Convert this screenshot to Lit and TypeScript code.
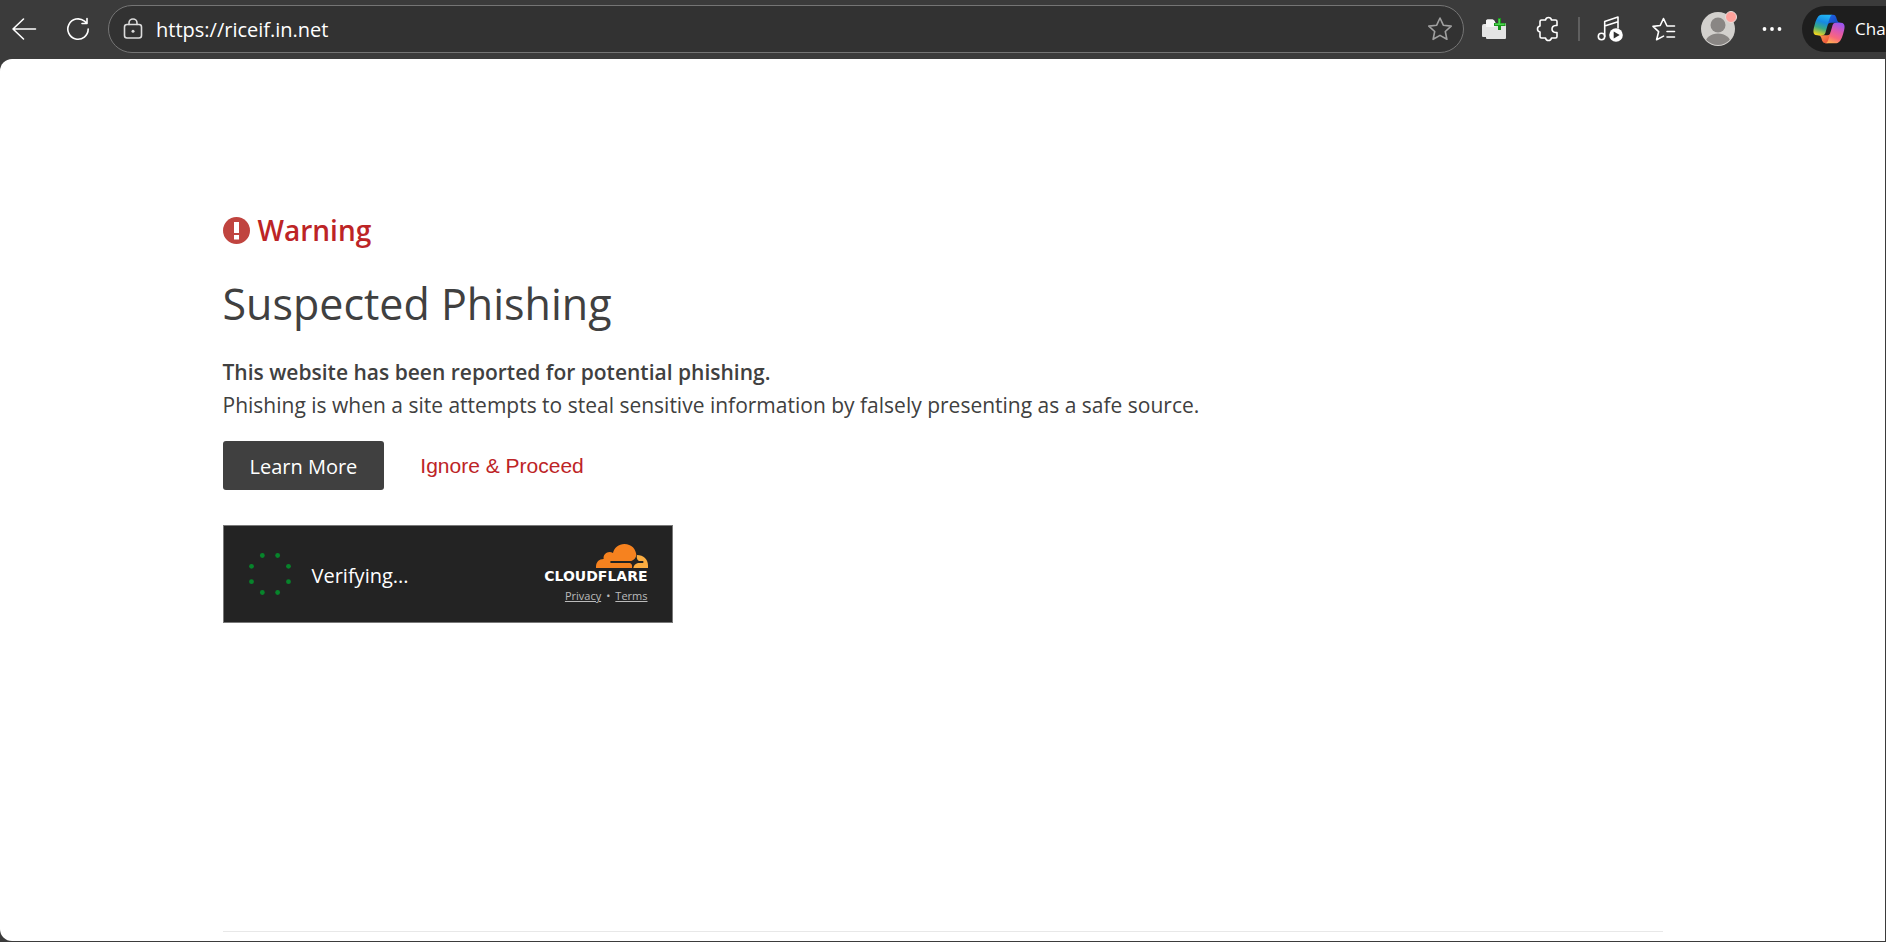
import { LitElement, html, css, svg } from "lit";
import { customElement, state } from "lit/decorators.js";

const DOTS = [22.5, 67.5, 112.5, 157.5, 202.5, 247.5, 292.5, 337.5].map((deg) => {
  const a = (deg * Math.PI) / 180;
  return { x: 22 + 20 * Math.cos(a), y: 22 + 20 * Math.sin(a) };
});

@customElement("browser-toolbar")
class BrowserToolbar extends LitElement {
  @state() private url = "https://riceif.in.net";

  static styles = css`
    :host {
      display: block;
      color: #fff;
    }
    .bar {
      display: flex;
      align-items: center;
      gap: 6px;
      height: 59px;
      box-sizing: border-box;
      padding-bottom: 1px;
      overflow: hidden;
    }
    button {
      border: 0;
      padding: 0;
      margin: 0;
      background: none;
      color: inherit;
      font: inherit;
    }
    .tool {
      flex: none;
      width: 48px;
      height: 48px;
      display: grid;
      place-items: center;
    }
    .tool svg {
      display: block;
    }
    .line {
      fill: none;
      stroke: currentColor;
      stroke-width: 1.6;
      stroke-linecap: round;
      stroke-linejoin: round;
    }
    .address {
      flex: 1;
      min-width: 0;
      height: 48px;
      box-sizing: border-box;
      display: flex;
      align-items: center;
      border: 1px solid #757575;
      border-radius: 24px;
      background: #323232;
    }
    .address .tool {
      width: 47px;
      height: 46px;
      color: #dcdcdc;
    }
    .address .star {
      color: #a0a0a0;
    }
    input {
      flex: 1;
      min-width: 0;
      border: 0;
      outline: 0;
      padding: 2px 0 0;
      background: none;
      color: #fff;
      font: 20px/28px "Open Sans", sans-serif;
    }
    .divider {
      flex: none;
      width: 2px;
      height: 24px;
      background: #5f5f5f;
    }
    .pill {
      flex: none;
      display: flex;
      align-items: center;
      gap: 9px;
      width: 84px;
      height: 46px;
      box-sizing: border-box;
      padding-left: 10px;
      border-radius: 23px 0 0 23px;
      background: #1e1e1e;
      font: 17px/24px "Open Sans", sans-serif;
    }
    .pill svg {
      flex: none;
    }
  `;

  render() {
    return html`
      <nav class="bar" aria-label="Browser">
        <button class="tool" aria-label="Back">
          <svg width="26" height="24" viewBox="0 0 26 24">
            <path class="line" d="M12.5 2 2 12l10.500 10M2 12h22.500" />
          </svg>
        </button>
        <button class="tool" aria-label="Refresh">
          <svg width="24" height="24" viewBox="0 0 24 24">
            <path class="line" d="M22.200 12A10.200 10.200 0 1 1 18.500 4.200L20.500 6M21 1.500v5h-5" />
          </svg>
        </button>
        <div class="address">
          <button class="tool" aria-label="View site information">
            <svg width="20" height="22" viewBox="0 0 20 22">
              <rect class="line" x="1.500" y="6.500" width="17" height="13.500" rx="2.500" />
              <path class="line" d="M6 6.500V5a4 4 0 0 1 8 0v1.500" />
              <circle cx="10" cy="13.200" r="1.500" fill="currentColor" />
            </svg>
          </button>
          <input
            aria-label="Address"
            .value=${this.url}
            @input=${(e: Event) => (this.url = (e.target as HTMLInputElement).value)}
          />
          <button class="tool star" aria-label="Add to favorites">
            <svg width="26" height="26" viewBox="0 0 26 26">
              <path
                class="line"
                d="M13 2l3.300 7.200 7.900.900-5.900 5.400 1.600 7.800L13 19.400l-6.900 3.900 1.600-7.800-5.900-5.400 7.900-.900z"
              />
            </svg>
          </button>
        </div>
        <button class="tool" aria-label="Extension">
          <svg width="24" height="22" viewBox="0 0 24 22">
            <path d="M4 3q0-1.500 1.500-1.500h5Q12 1.500 12.500 3l1 2H23q1 0 1 1v14q0 1-1 1H5q-1 0-1-1v-1H1q-1 0-1-1V8q0-2 2-2h2z" fill="#e4e4e4" />
            <path d="M4 3q0-1.500 1.500-1.500h5Q12 1.500 12.500 3l1 2v4H4z" fill="#f6f6f6" />
            <path d="M16 0h3v5h4.500v3H19v4h-3V8h-4V5h4z" fill="#18951b" />
            <path d="M16.500 1H18v4.500h4.500V7H13V5.500h3.500z" fill="#4fd44f" />
          </svg>
        </button>
        <button class="tool" aria-label="Extensions">
          <svg width="24" height="26" viewBox="0 0 24 26">
            <path
              class="line"
              d="M5.500 4H9.500Q10 1.500 12.500 1.500T15.500 4H19.500Q21 4 21 5.500V9.500H19.500Q16 10 16 13t3.500 3.500H21V20.500Q21 22 19.500 22H15.500Q15 24.500 12.500 24.500T9.500 22H5.500Q4 22 4 20.500V16Q1.500 15.500 1.500 13T4 10V5.500Q4 4 5.500 4z"
            />
          </svg>
        </button>
        <div class="divider"></div>
        <button class="tool" aria-label="Media controls">
          <svg width="26" height="28" viewBox="0 0 26 28">
            <circle class="line" cx="4.500" cy="21.500" r="3.200" />
            <path class="line" d="M7.700 21.500V6.500L21 2v11M7.700 11 21 6.700" />
            <circle cx="19" cy="20" r="6.800" fill="currentColor" />
            <path d="M16.700 16.500v7l6-3.500z" fill="#303030" />
          </svg>
        </button>
        <button class="tool" aria-label="Favorites">
          <svg width="26" height="26" viewBox="0 0 26 26">
            <path
              class="line"
              d="M23.500 10H16L12.500 2.500 9.200 9.500l-7.200.900 5.600 5.300-2 8 6.900-3.600M16 15.500h7.500M16 21h7.500"
            />
          </svg>
        </button>
        <button class="tool" aria-label="Profile">
          <svg width="38" height="38" viewBox="0 0 38 38">
            <defs>
              <clipPath id="face"><circle cx="19" cy="19" r="16" /></clipPath>
            </defs>
            <circle cx="19" cy="19" r="17" fill="#d2d0cd" />
            <g clip-path="url(#face)" fill="#898684">
              <circle cx="19" cy="15" r="7.500" />
              <ellipse cx="19" cy="34" rx="13" ry="10.500" />
            </g>
            <circle cx="32" cy="7" r="5.500" fill="#ffa19b" stroke="#e6dcda" stroke-width="1" />
          </svg>
        </button>
        <button class="tool" aria-label="Settings and more">
          <svg width="20" height="6" viewBox="0 0 20 6" fill="currentColor">
            <circle cx="2.500" cy="3" r="1.900" />
            <circle cx="10" cy="3" r="1.900" />
            <circle cx="17.500" cy="3" r="1.900" />
          </svg>
        </button>
        <button class="pill">
          <svg width="34" height="32" viewBox="0 2 48 44">
            <defs>
              <linearGradient id="c1" x1="1" y1="1" x2="0" y2="0">
                <stop offset="0" stop-color="#0a3fb5" /><stop offset="1" stop-color="#2467e8" />
              </linearGradient>
              <linearGradient id="c2" x1="0" y1="0" x2="1" y2="1">
                <stop offset="0" stop-color="#ffb657" /><stop offset="1" stop-color="#e83e32" />
              </linearGradient>
              <linearGradient id="c3" x1="0.600" y1="0" x2="0.300" y2="1">
                <stop offset="0" stop-color="#22b4f4" /><stop offset="0.350" stop-color="#1689e2" />
                <stop offset="0.650" stop-color="#3aa982" /><stop offset="1" stop-color="#f2d51b" />
              </linearGradient>
              <linearGradient id="c4" x1="0.700" y1="0" x2="0.300" y2="1">
                <stop offset="0" stop-color="#9a55f0" /><stop offset="0.400" stop-color="#df58ad" />
                <stop offset="0.700" stop-color="#f9677c" /><stop offset="1" stop-color="#ffad54" />
              </linearGradient>
            </defs>
            <path fill="url(#c1)" d="M34.142 7.325A4.630 4.630 0 0 0 29.700 4h-1.350a4.630 4.630 0 0 0-4.554 3.794L21.480 20.407l.575-1.965a4.630 4.630 0 0 1 4.444-3.330h7.853l3.294 1.282 3.175-1.283h-.926a4.630 4.630 0 0 1-4.443-3.325z" />
            <path fill="url(#c2)" d="M14.330 40.656A4.630 4.630 0 0 0 18.779 44h2.870a4.630 4.630 0 0 0 4.629-4.510l.312-12.163-.654 2.233a4.630 4.630 0 0 1-4.443 3.329h-7.919l-2.823-1.531-3.057 1.531h.912a4.630 4.630 0 0 1 4.448 3.344z" />
            <path fill="url(#c3)" d="M29.500 4H13.460c-4.583 0-7.332 6.057-9.165 12.113C2.123 23.290-.720 32.885 7.503 32.885h6.925a4.630 4.630 0 0 0 4.456-3.358 2078 2078 0 0 1 4.971-17.156c.843-2.843 1.544-5.284 2.621-6.805C27.080 4.714 28.086 4 29.500 4z" />
            <path fill="url(#c4)" d="M18.498 44h16.040c4.582 0 7.332-6.058 9.165-12.115 2.172-7.177 5.015-16.775-3.208-16.775h-6.926a4.630 4.630 0 0 0-4.456 3.358 2084 2084 0 0 1-4.972 17.160c-.842 2.844-1.543 5.285-2.620 6.806-.604.852-1.610 1.566-3.023 1.566z" />
          </svg>
          <span>Cha</span>
        </button>
      </nav>
    `;
  }
}

@customElement("verify-widget")
class VerifyWidget extends LitElement {
  static styles = css`
    :host {
      display: block;
    }
    .box {
      display: flex;
      align-items: center;
      box-sizing: border-box;
      max-width: 450px;
      height: 98px;
      padding: 0 24px;
      border: 1px solid #797979;
      background: #232323;
      color: #fff;
    }
    .spinner {
      flex: none;
      margin-right: 20px;
    }
    .status {
      flex: 1;
      padding-top: 4px;
      font: 20px/28px "Open Sans", sans-serif;
    }
    .brand {
      display: flex;
      flex-direction: column;
      align-items: flex-end;
    }
    .word {
      font: 700 14px/17px "DejaVu Sans", sans-serif;
    }
    .links {
      display: flex;
      gap: 5px;
      padding-top: 3px;
      font: 11px/16px "Open Sans", sans-serif;
      color: #bbb;
    }
    .links a {
      color: inherit;
    }
  `;

  render() {
    return html`
      <div class="box">
        <svg class="spinner" width="44" height="44" viewBox="0 0 44 44" fill="#07842b" aria-hidden="true">
          ${DOTS.map((d) => svg`<circle cx=${d.x} cy=${d.y} r="2.400" />`)}
        </svg>
        <span class="status" role="status">Verifying...</span>
        <div class="brand">
          <svg width="52" height="24" viewBox="0 0 156 72" aria-hidden="true">
            <path
              fill="#f6821f"
              d="M0 72V68C0 54 9 45 23 45C20 29 38 18 51 27C55 11 68 0 85 0C107 0 120 16 121 33C120 42 114 48 106 51H44Q41 54 44 57H102Q110 60 108 72z"
            />
            <path
              fill="#fbad41"
              d="M123 33C143 33 156 46 156 64V72H112C113 64 118 59 126 57H141Q145 54 141 51H130C123 49 121 40 123 33z"
            />
          </svg>
          <span class="word">CLOUDFLARE</span>
          <div class="links"><a href="#privacy">Privacy</a><span>•</span><a href="#terms">Terms</a></div>
        </div>
      </div>
    `;
  }
}

@customElement("app-root")
class AppRoot extends LitElement {
  static styles = css`
    :host {
      display: flex;
      flex-direction: column;
      min-height: 100vh;
      background: #3b3b3b;
      font-family: "Open Sans", sans-serif;
    }
    .page {
      flex: 1;
      display: flex;
      flex-direction: column;
      margin: 0 1px 1px 0;
      padding: 0 24px;
      border-radius: 12px 0 0 12px;
      background: #fff;
      color: #404040;
    }
    .content,
    .footer {
      width: 100%;
      max-width: 1440px;
      margin: 0 auto;
    }
    .content {
      flex: 1;
      padding-top: 151px;
    }
    .footer {
      height: 9px;
      border-top: 1px solid #e8e8e8;
    }
    .warning {
      display: flex;
      align-items: center;
      gap: 8px;
      color: #bd2426;
      font-size: 28px;
      font-weight: 600;
      line-height: 40px;
    }
    h1 {
      margin: 24px 0 22px;
      font-size: 43px;
      font-weight: 400;
      line-height: 60px;
    }
    p {
      margin: 0;
      font-size: 21px;
      line-height: 33px;
    }
    strong {
      display: block;
      font-weight: 600;
    }
    .actions {
      display: flex;
      align-items: center;
      gap: 36px;
      margin: 19px 0 35px;
    }
    .learn {
      padding: 11px 27px 8px;
      border-radius: 3px;
      background: #404040;
      color: #fff;
      font-size: 20px;
      line-height: 30px;
      text-decoration: none;
    }
    .ignore {
      border: 0;
      padding: 0;
      background: none;
      color: #bd2426;
      font: 21px/30px "Liberation Sans", Arial, sans-serif;
    }
  `;

  render() {
    return html`
      <browser-toolbar></browser-toolbar>
      <main class="page">
        <section class="content">
          <div class="warning">
            <svg width="27" height="27" viewBox="0 0 27 27" aria-hidden="true">
              <circle cx="13.500" cy="13.500" r="13.500" fill="#c0443f" />
              <path d="M11 5h5v11h-5zM11 18h5v4.500h-5z" fill="#fff" />
            </svg>
            <span>Warning</span>
          </div>
          <h1>Suspected Phishing</h1>
          <p>
            <strong>This website has been reported for potential phishing.</strong>
            Phishing is when a site attempts to steal sensitive information by falsely presenting as a safe source.
          </p>
          <div class="actions">
            <a class="learn" href="#learn-more">Learn More</a>
            <button class="ignore">Ignore &amp; Proceed</button>
          </div>
          <verify-widget></verify-widget>
        </section>
        <div class="footer"></div>
      </main>
    `;
  }
}
